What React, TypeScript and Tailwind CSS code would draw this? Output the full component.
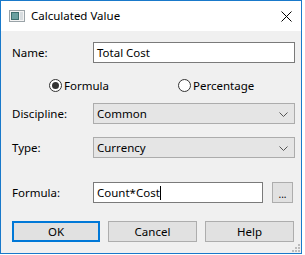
import React from 'react';

const font = { fontFamily: '"Noto Sans", "Open Sans", sans-serif' };

const Chevron: React.FC = () => (
  <svg width="9" height="5" viewBox="0 0 9 5" className="absolute right-[6px] top-[8px]">
    <path d="M0.5 0.5 L4.5 4.5 L8.5 0.5" fill="none" stroke="#555" strokeWidth="1" />
  </svg>
);

const Radio: React.FC<{ checked?: boolean; label: string }> = ({ checked, label }) => (
  <div className="flex items-center">
    <div className="w-[13px] h-[13px] rounded-full border border-[#333] bg-white flex items-center justify-center">
      {checked && <div className="w-[7px] h-[7px] rounded-full bg-[#333]" />}
    </div>
    <span className="ml-[2px] text-[11.5px] leading-none text-black">{label}</span>
  </div>
);

const Row: React.FC<{ label: string; className?: string; children: React.ReactNode }> = ({ label, className, children }) => (
  <div className={`flex items-center h-[21px] ${className ?? ''}`}>
    <span className="w-[81px] text-[11.5px] text-black">{label}</span>
    {children}
  </div>
);

const Select: React.FC<{ value: string }> = ({ value }) => (
  <div className="relative w-[202px] h-[21px] bg-[#e5e5e5] border border-[#acacac] flex items-center pl-[3px] text-[11.5px] text-black">
    {value}
    <Chevron />
  </div>
);

export default function App() {
  return (
    <div className="w-[305px] h-[255px] bg-white" style={font}>
      <div className="w-[302px] h-[254px] border border-[#1979ca] flex flex-col">
        {/* title bar */}
        <div className="h-[30px] bg-white flex items-center shrink-0">
          <svg width="16" height="12" viewBox="0 0 16 12" className="ml-[8px]">
            <rect x="0.5" y="0.5" width="15" height="11" fill="#f4f4f4" stroke="#9aa3a8" />
            <rect x="2" y="2" width="8" height="8" fill="#3d6e6e" />
            <rect x="3" y="3" width="6" height="6" fill="#6aa0a0" />
            <rect x="11" y="2" width="3" height="8" fill="#d8dde0" />
          </svg>
          <span className="ml-[6px] text-[11.5px] text-black">Calculated Value</span>
          <svg width="11" height="11" viewBox="0 0 11 11" className="ml-auto mr-[9px]">
            <path d="M0.5 0.5 L10.5 10.5 M10.5 0.5 L0.5 10.5" stroke="#000" strokeWidth="1" />
          </svg>
        </div>
        {/* body */}
        <div className="relative flex-1 bg-[#f0f0f0] pl-[11px] flex flex-col">
          <Row label="Name:" className="mt-[11px]">
            <div className="w-[202px] h-[21px] bg-white border border-[#7a7a7a] flex items-center pl-[3px] text-[11.5px] text-black">
              Total Cost
            </div>
          </Row>
          <div className="flex items-center mt-[16px] h-[13px] pl-[37px]">
            <Radio checked label="Formula" />
            <div className="ml-[69px]">
              <Radio label="Percentage" />
            </div>
          </div>
          <Row label="Discipline:" className="mt-[11px]">
            <Select value="Common" />
          </Row>
          <Row label="Type:" className="mt-[13px]">
            <Select value="Currency" />
          </Row>
          <Row label="Formula:" className="mt-[24px]">
            <div className="w-[170px] h-[21px] bg-white border border-[#7a7a7a] flex items-center pl-[3px] text-[11.5px] text-black">
              Count*Cost
              <span className="inline-block w-px h-[14px] bg-black" />
            </div>
            <div className="ml-[9px] w-[21px] h-[21px] bg-[#e1e1e1] border border-[#adadad] flex items-center justify-center text-[10px] text-black leading-none pt-[2px]">
              ...
            </div>
          </Row>
          <div className="flex mt-[18px] h-[21px] gap-[8px] text-[11.5px] text-black">
            <div className="w-[88px] h-[21px] bg-[#e1e1e1] border-2 border-[#0078d7] flex items-center justify-center">OK</div>
            <div className="w-[89px] h-[21px] bg-[#e1e1e1] border border-[#adadad] flex items-center justify-center">Cancel</div>
            <div className="w-[89px] h-[21px] bg-[#e1e1e1] border border-[#adadad] flex items-center justify-center">Help</div>
          </div>
          <svg width="8" height="8" viewBox="0 0 8 8" className="absolute right-[1px] bottom-[1px]">
            <rect x="6" y="0" width="2" height="2" fill="#bcbcbc" />
            <rect x="3" y="3" width="2" height="2" fill="#bcbcbc" />
            <rect x="6" y="3" width="2" height="2" fill="#bcbcbc" />
            <rect x="0" y="6" width="2" height="2" fill="#bcbcbc" />
            <rect x="3" y="6" width="2" height="2" fill="#bcbcbc" />
            <rect x="6" y="6" width="2" height="2" fill="#bcbcbc" />
          </svg>
        </div>
      </div>
    </div>
  );
}
